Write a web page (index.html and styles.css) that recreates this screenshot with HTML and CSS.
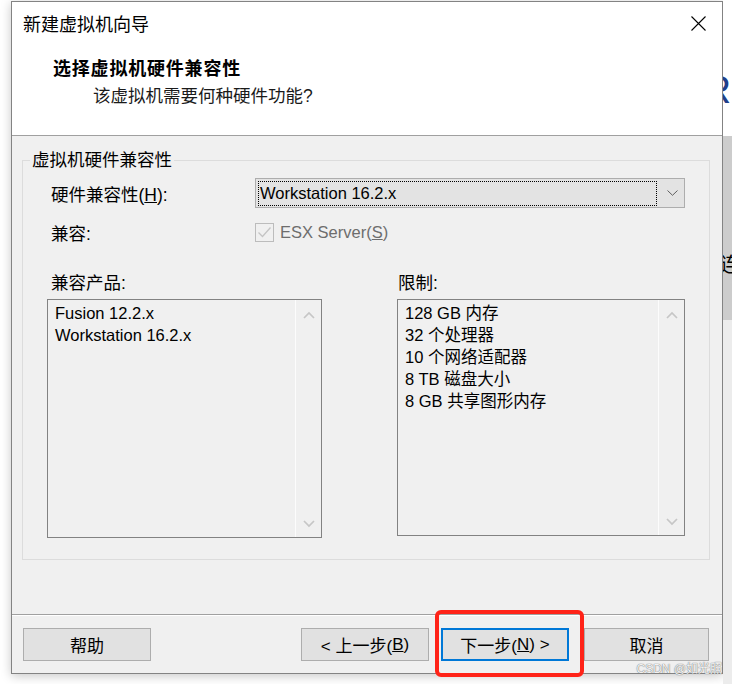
FILE: index.html
```html
<!DOCTYPE html>
<html lang="zh-CN">
<head>
<meta charset="utf-8">
<title>新建虚拟机向导</title>
<link rel="stylesheet" href="styles.css">
</head>
<body>
<div class="screen">
  <div class="dialog">
    <div class="header">
      <div class="titlebar">
        <span class="title">新建虚拟机向导</span>
        <svg class="close" width="15" height="15" viewBox="0 0 15 15"><path d="M0.5 0.5L14.5 14.5M14.5 0.5L0.5 14.5" stroke="#000" stroke-width="1.1" fill="none"/></svg>
      </div>
      <div class="heading">选择虚拟机硬件兼容性</div>
      <div class="subheading">该虚拟机需要何种硬件功能?</div>
    </div>
    <div class="body">
      <fieldset class="group">
        <legend>虚拟机硬件兼容性</legend>
        <div class="group-inner">
          <div class="row row-hw">
            <span class="label">硬件兼容性(<u>H</u>):</span>
            <div class="combo">
              <div class="combo-focus">Workstation 16.2.x</div>
              <div class="combo-arrow"><svg width="11" height="6" viewBox="0 0 11 6"><path d="M0.5 0.5L5.5 5.3L10.5 0.5" stroke="#5f5f5f" stroke-width="1" fill="none"/></svg></div>
            </div>
          </div>
          <div class="row row-compat">
            <span class="label">兼容:</span>
            <div class="check">
              <span class="box"><svg width="17" height="17" viewBox="0 0 17 17"><path d="M2.5 8.5L6.5 12.5L14.5 3.5" stroke="#c4c4c4" stroke-width="1.3" fill="none"/></svg></span>
              <span class="check-text">ESX Server(<u>S</u>)</span>
            </div>
          </div>
          <div class="lists">
            <div class="list-col left">
              <div class="list-label">兼容产品:</div>
              <div class="listbox">
                <div class="items">
                  <div>Fusion 12.2.x</div>
                  <div>Workstation 16.2.x</div>
                </div>
                <div class="scroll">
                  <svg width="12" height="8" viewBox="0 0 12 8"><path d="M1 7L6 2L11 7" stroke="#c6c6c6" stroke-width="1.7" fill="none"/></svg>
                  <svg width="12" height="8" viewBox="0 0 12 8"><path d="M1 1L6 6L11 1" stroke="#c6c6c6" stroke-width="1.7" fill="none"/></svg>
                </div>
              </div>
            </div>
            <div class="list-col right">
              <div class="list-label">限制:</div>
              <div class="listbox">
                <div class="items">
                  <div>128 GB 内存</div>
                  <div>32 个处理器</div>
                  <div>10 个网络适配器</div>
                  <div>8 TB 磁盘大小</div>
                  <div>8 GB 共享图形内存</div>
                </div>
                <div class="scroll">
                  <svg width="12" height="8" viewBox="0 0 12 8"><path d="M1 7L6 2L11 7" stroke="#c6c6c6" stroke-width="1.7" fill="none"/></svg>
                  <svg width="12" height="8" viewBox="0 0 12 8"><path d="M1 1L6 6L11 1" stroke="#c6c6c6" stroke-width="1.7" fill="none"/></svg>
                </div>
              </div>
            </div>
          </div>
        </div>
      </fieldset>
    </div>
    <div class="footer">
      <div class="btn btn-help">帮助</div>
      <div class="btn btn-prev">&lt; 上一步(<u>B</u>)</div>
      <div class="btn btn-next">下一步(<u>N</u>) &gt;</div>
      <div class="btn btn-cancel">取消</div>
    </div>
  </div>
  <div class="backdrop">
    <div class="bd-top"><span class="bd-r">R</span></div>
    <div class="bd-mid"><span class="bd-char">连</span></div>
    <div class="bd-low"></div>
  </div>
  <div class="highlight"></div>
  <div class="watermark">CSDN @如光照</div>
</div>
</body>
</html>
```
FILE: styles.css
```css
* { box-sizing: border-box; }
html, body { margin: 0; padding: 0; }
body {
  background: #fff;
  color: #000;
  font-family: "Liberation Sans", "Noto Sans CJK SC", sans-serif;
}
.screen {
  position: relative;
  width: 732px;
  height: 684px;
  display: flex;
  align-items: flex-start;
  overflow: hidden;
  background: #fff;
}
.dialog {
  flex: none;
  width: 712px;
  height: 673px;
  margin: 1px 0 0 11px;
  border: 1px solid #838383;
  background: #f0f0f0;
  box-shadow: 0 2px 10px rgba(0, 0, 0, 0.22);
  display: flex;
  flex-direction: column;
}
.header {
  flex: none;
  height: 134px;
  background: #fff;
  border-bottom: 1px solid #a0a0a0;
  padding-left: 11px;
}
.titlebar {
  height: 42px;
  display: flex;
  align-items: center;
  justify-content: space-between;
  padding-right: 16px;
}
.title {
  font-family: "Noto Sans CJK SC", sans-serif;
  font-size: 18px;
  line-height: 24px;
}
.close { display: block; }
.heading {
  margin: 11px 0 0 30px;
  font-family: "Noto Sans CJK SC", sans-serif;
  font-size: 18px;
  font-weight: 700;
  letter-spacing: 0.8px;
  line-height: 24px;
}
.subheading {
  margin: 5px 0 0 70px;
  font-size: 17.5px;
  line-height: 24px;
  color: #1a1a1a;
}
.body {
  flex: none;
  height: 478px;
  padding: 12px 0 0 10px;
}
.group {
  margin: 0;
  width: 688px;
  min-width: 0;
  padding: 0 0 21px 7px;
  border: 1px solid #dcdcdc;
}
.group legend {
  padding: 0 2px;
  font-size: 17.5px;
  line-height: 24px;
}
.group-inner { padding-left: 17px; }
.row {
  display: flex;
  align-items: center;
  height: 30px;
}
.row-hw { margin-top: 6px; }
.row-compat { margin-top: 9px; }
.label {
  flex: none;
  width: 208px;
  padding-left: 4px;
  font-size: 17.5px;
}
.combo {
  flex: none;
  width: 430px;
  height: 30px;
  border: 1px solid #adadad;
  background: #e3e3e3;
  display: flex;
  align-items: flex-start;
  padding: 2px 0 0 2px;
}
.combo-focus {
  flex: none;
  width: 399px;
  height: 25px;
  border: 1px dotted #000;
  padding-left: 1px;
  font-size: 16.5px;
  line-height: 23px;
}
.combo-arrow {
  flex: 1;
  height: 24px;
  display: flex;
  align-items: center;
  justify-content: center;
  padding-left: 3px;
}
.combo-arrow svg { display: block; }
.check {
  display: flex;
  align-items: center;
}
.box {
  width: 19px;
  height: 19px;
  border: 1px solid #bcbcbc;
  background: #f0f0f0;
  display: flex;
}
.check-text {
  margin-left: 6px;
  color: #6d6d6d;
  font-size: 16.5px;
}
.lists {
  display: flex;
  align-items: flex-start;
  margin-top: 25px;
}
.list-col.left { width: 275px; }
.list-col.right { width: 288px; margin-left: 75px; }
.list-label {
  font-size: 17.5px;
  line-height: 22px;
}
.left .list-label { padding-left: 4px; }
.right .list-label { padding-left: 1px; }
.listbox {
  margin-top: 5px;
  border: 1px solid #828282;
  background: #f0f0f0;
  display: flex;
}
.left .listbox { height: 239px; }
.right .listbox { height: 237px; }
.items {
  flex: 1;
  padding: 2px 0 0 7px;
  font-size: 16.5px;
  line-height: 22px;
}
.scroll {
  flex: none;
  width: 26px;
  border-left: 1px solid #fcfcfc;
  display: flex;
  flex-direction: column;
  justify-content: space-between;
  align-items: center;
  padding: 11px 0 9px;
}
.scroll svg { display: block; }
.footer {
  flex: none;
  height: 59px;
  border-top: 1px solid #a0a0a0;
  box-shadow: inset 0 1px 0 #fff;
  display: flex;
  align-items: flex-start;
  padding: 13px 13px 0 11px;
}
.btn {
  flex: none;
  width: 128px;
  height: 33px;
  border: 1px solid #adadad;
  background: #e1e1e1;
  display: flex;
  align-items: center;
  justify-content: center;
  font-size: 17px;
}
.btn-prev { margin-left: auto; }
.btn-next { margin-left: 12px; border: 2px solid #0078d7; }
.btn-cancel { margin-left: 15px; width: 125px; }
.backdrop {
  flex: 1;
  height: 684px;
  overflow: hidden;
  display: flex;
  flex-direction: column;
}
.bd-top {
  flex: none;
  height: 136px;
  background: #fff;
  padding-top: 70px;
}
.bd-r {
  display: block;
  margin-left: -20px;
  font-size: 39px;
  line-height: 39px;
  color: #1f3f8a;
}
.bd-mid {
  flex: none;
  height: 184px;
  background: #cccccc;
  padding-top: 118px;
}
.bd-char {
  display: block;
  margin-left: -3px;
  font-family: "Noto Sans CJK SC", sans-serif;
  font-size: 20px;
  line-height: 20px;
  white-space: nowrap;
}
.bd-low {
  flex: 1;
  background: #ececec;
}
.highlight {
  position: absolute;
  left: 435px;
  top: 610px;
  width: 149px;
  height: 67px;
  border: 4px solid #ff2318;
  border-radius: 6px;
}
.watermark {
  position: absolute;
  right: 10px;
  top: 661px;
  font-size: 12px;
  line-height: 16px;
  color: rgba(255, 255, 255, 0.92);
  text-shadow: 0 0 1px #7a7a7a, 0 0 1px #7a7a7a;
  white-space: nowrap;
}
```
